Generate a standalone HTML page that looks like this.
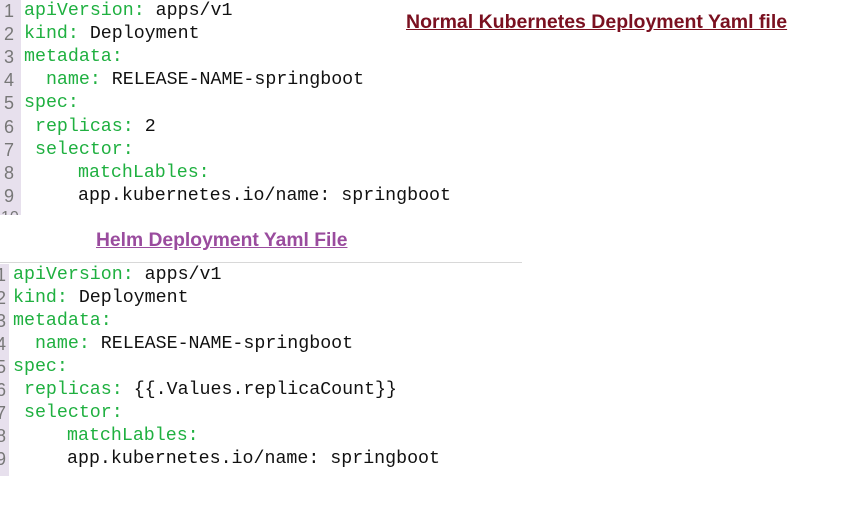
<!DOCTYPE html>
<html><head><style>
body{margin:0;width:867px;height:506px;background:#fff;position:relative;overflow:hidden;font-family:"Liberation Mono",monospace}
.g{position:absolute;background:#e7e0ed}
.l{position:absolute;font-size:18.3px;line-height:20px;white-space:pre;color:#111}
.n{position:absolute;font-size:18px;line-height:20px;color:#777;font-family:"Liberation Sans",sans-serif}
.k{color:#1fb040}
.h{position:absolute;font-family:"Liberation Sans",sans-serif;font-weight:bold;text-decoration:underline;white-space:nowrap}
</style></head><body>
<div class="g" style="left:0;top:0;width:21px;height:215px"></div>
<div class="g" style="left:0;top:264px;width:9px;height:212px"></div>
<div style="position:absolute;left:0;top:262px;width:522px;height:1px;background:#d8d8d8"></div>

<div class="h" style="left:406px;top:11px;font-size:19.5px;color:#7a1020">Normal Kubernetes Deployment Yaml file</div>
<div class="h" style="left:96px;top:230px;font-size:19.3px;color:#9a4c9e">Helm Deployment Yaml File</div>

<!-- top block -->
<div class="n" style="left:4px;top:1px">1</div><div class="l" style="left:24px;top:1px"><span class="k">apiVersion:</span> apps/v1</div>
<div class="n" style="left:4px;top:24px">2</div><div class="l" style="left:24px;top:24px"><span class="k">kind:</span> Deployment</div>
<div class="n" style="left:4px;top:47px">3</div><div class="l" style="left:24px;top:47px"><span class="k">metadata:</span></div>
<div class="n" style="left:4px;top:70px">4</div><div class="l" style="left:24px;top:70px">  <span class="k">name:</span> RELEASE-NAME-springboot</div>
<div class="n" style="left:4px;top:93px">5</div><div class="l" style="left:24px;top:93px"><span class="k">spec:</span></div>
<div class="n" style="left:4px;top:117px">6</div><div class="l" style="left:24px;top:117px"> <span class="k">replicas:</span> 2</div>
<div class="n" style="left:4px;top:140px">7</div><div class="l" style="left:24px;top:140px"> <span class="k">selector:</span></div>
<div class="n" style="left:4px;top:163px">8</div><div class="l" style="left:78px;top:163px"><span class="k">matchLables:</span></div>
<div class="n" style="left:4px;top:186px">9</div><div class="l" style="left:78px;top:186px">app.kubernetes.io/name: springboot</div>
<div style="position:absolute;left:0;top:208px;width:30px;height:7px;overflow:hidden"><div class="n" style="left:1px;top:0;font-size:16px">10</div></div>

<!-- bottom block -->
<div class="n" style="left:-4px;top:265px">1</div><div class="l" style="left:13px;top:265px"><span class="k">apiVersion:</span> apps/v1</div>
<div class="n" style="left:-4px;top:288px">2</div><div class="l" style="left:13px;top:288px"><span class="k">kind:</span> Deployment</div>
<div class="n" style="left:-4px;top:311px">3</div><div class="l" style="left:13px;top:311px"><span class="k">metadata:</span></div>
<div class="n" style="left:-4px;top:334px">4</div><div class="l" style="left:13px;top:334px">  <span class="k">name:</span> RELEASE-NAME-springboot</div>
<div class="n" style="left:-4px;top:357px">5</div><div class="l" style="left:13px;top:357px"><span class="k">spec:</span></div>
<div class="n" style="left:-4px;top:380px">6</div><div class="l" style="left:13px;top:380px"> <span class="k">replicas:</span> {{.Values.replicaCount}}</div>
<div class="n" style="left:-4px;top:403px">7</div><div class="l" style="left:13px;top:403px"> <span class="k">selector:</span></div>
<div class="n" style="left:-4px;top:426px">8</div><div class="l" style="left:67px;top:426px"><span class="k">matchLables:</span></div>
<div class="n" style="left:-4px;top:449px">9</div><div class="l" style="left:67px;top:449px">app.kubernetes.io/name: springboot</div>
</body></html>
